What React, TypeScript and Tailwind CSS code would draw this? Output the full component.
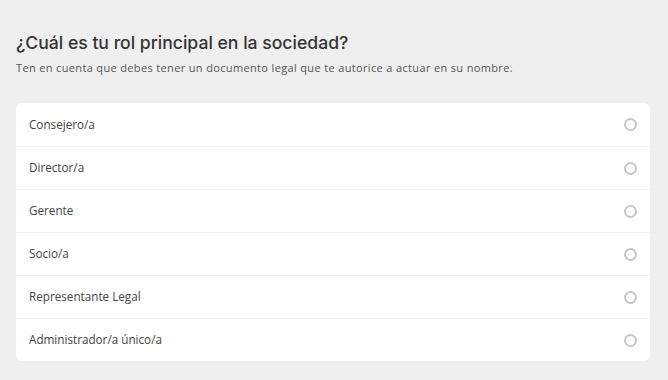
import React from "react";

const roles = [
  "Consejero/a",
  "Director/a",
  "Gerente",
  "Socio/a",
  "Representante Legal",
  "Administrador/a único/a",
];

export default function App() {
  return (
    <div
      className="min-h-[380px] bg-[#efefef] px-4 pt-[31px]"
      style={{ fontFamily: "'Open Sans', 'Liberation Sans', sans-serif" }}
    >
      <h1
        className="text-[17.6px] leading-[24px] font-medium text-[#333]"
        style={{ fontFamily: "Inter, 'Open Sans', sans-serif" }}
      >
        ¿Cuál es tu rol principal en la sociedad?
      </h1>
      <p className="mt-[5px] text-[11px] leading-[16px] text-[#555] tracking-[0.35px]">
        Ten en cuenta que debes tener un documento legal que te autorice a actuar en su nombre.
      </p>

      {/* Options card */}
      <div className="mt-[27px] w-[634px] bg-white rounded-md">
        {roles.map((role, i) => (
          <label
            key={role}
            className={
              "flex items-center justify-between h-[43px] pl-[13px] pr-[13px] cursor-pointer " +
              (i > 0 ? "border-t border-[#f1f1f1]" : "")
            }
          >
            <span className="text-[11.7px] text-[#444]">{role}</span>
            <span className="w-[13px] h-[13px] rounded-full border-2 border-[#c6c6c6]" />
          </label>
        ))}
      </div>
    </div>
  );
}
